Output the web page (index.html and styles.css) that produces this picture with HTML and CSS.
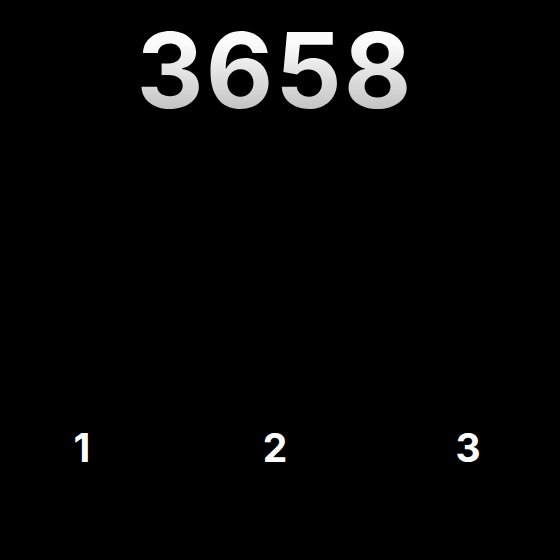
FILE: index.html
```html
<!DOCTYPE html>
<html>
<head>
<meta charset="utf-8">
<link rel="stylesheet" href="styles.css">
</head>
<body>
<div class="screen">
  <div class="total">3658</div>
  <div class="choices">
    <div class="choice">1</div>
    <div class="choice">2</div>
    <div class="choice">3</div>
  </div>
</div>
</body>
</html>
```
FILE: styles.css
```css
html, body {
  margin: 0;
  padding: 0;
  background: #000;
}
.screen {
  width: 550px;
  height: 560px;
  display: flex;
  flex-direction: column;
  align-items: center;
  font-family: Inter, "Noto Sans", sans-serif;
}
.total {
  margin-top: 18px;
  font-size: 104px;
  line-height: 1;
  font-weight: 700;
  letter-spacing: 2px;
  background: linear-gradient(180deg, #fbfbfb 25%, #c6c6c6 85%);
  -webkit-background-clip: text;
  background-clip: text;
  color: transparent;
}
.choices {
  margin-top: 306px;
  display: flex;
  gap: 153px;
}
.choice {
  width: 40px;
  text-align: center;
  font-size: 39px;
  line-height: 1;
  font-weight: 650;
  color: #fff;
}
```
